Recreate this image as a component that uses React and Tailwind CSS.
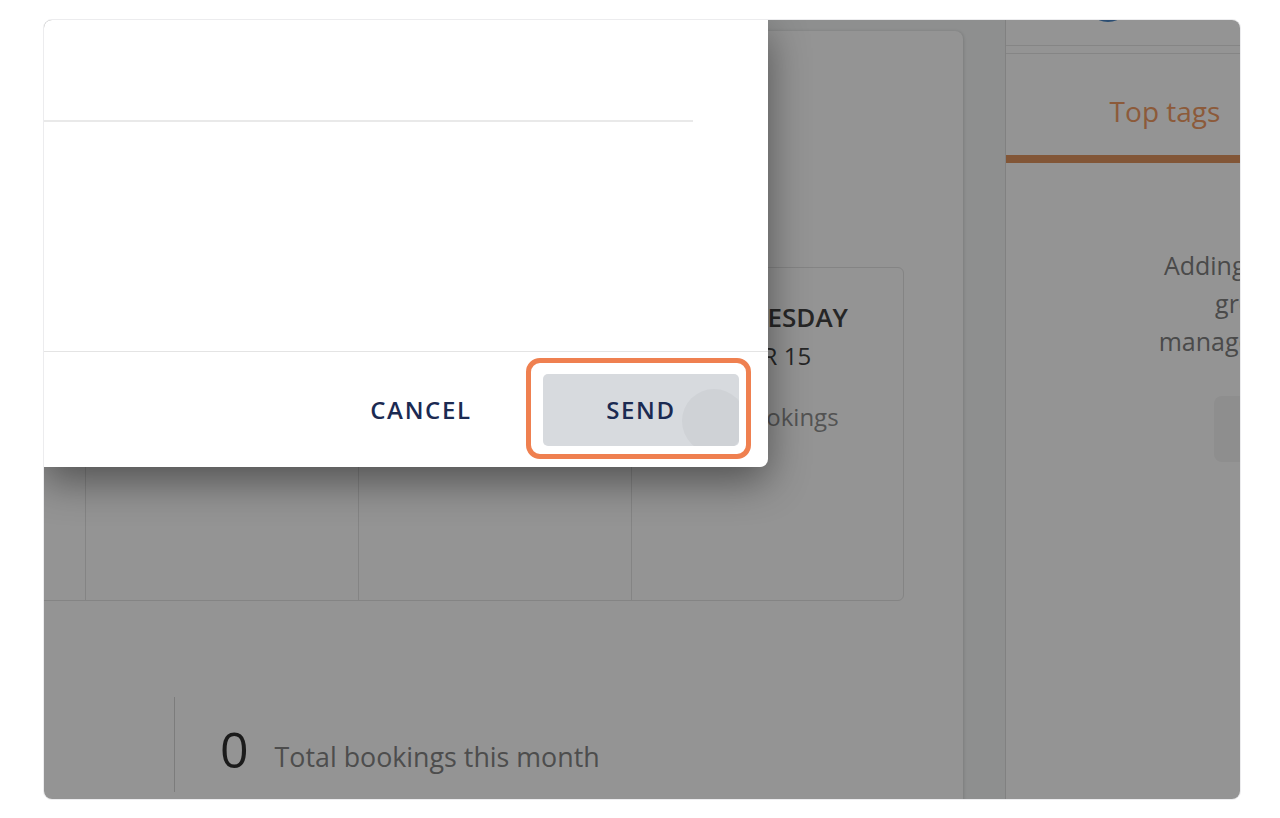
import React from "react";

const font = { fontFamily: '"Open Sans", "Noto Sans", Arial, sans-serif' };

function DayColumn({ day, date, last }) {
  return (
    <div className={`w-[273px] shrink-0 h-full flex flex-col items-center pt-[33px] ${last ? "" : "border-r border-[#e4e4e4]"}`}>
      <div className="text-[26px] leading-[32px] font-semibold text-[#424242]">{day}</div>
      <div className="mt-[8px] text-[24px] leading-[30px] text-[#424242]">{date}</div>
      <div className="mt-[31px] text-[24px] leading-[30px] text-[#8f8f8f]">No bookings</div>
    </div>
  );
}

export default function App() {
  return (
    <div className="min-h-screen bg-white pt-[19px] pl-[43px]" style={font}>
      <div className="relative w-[1198px] h-[781px] rounded-[9px] border border-[#ececee] overflow-hidden">
        {/* background page */}
        <div className="flex h-full">
          <div className="w-[961px] shrink-0 bg-[#f4f6f6] pt-[11px] pr-[42px]">
            <div className="ml-[-300px] w-[1219px] h-[800px] bg-white rounded-[8px] shadow-[1px_0_3px_rgba(0,0,0,0.12)] pl-[68px] pt-[236px]">
              <div className="w-[1092px] h-[334px] border border-[#e3e3e3] rounded-[6px] flex">
                <DayColumn day="SUNDAY" date="MAR 12" />
                <DayColumn day="MONDAY" date="MAR 13" />
                <DayColumn day="TUESDAY" date="MAR 14" />
                <DayColumn day="WEDNESDAY" date="MAR 15" last />
              </div>
              <div className="mt-[96px] flex">
                <div className="w-[362px] shrink-0 h-[95px]" />
                <div className="h-[95px] border-l border-[#d6d6d6] pl-[45px] flex items-end pb-[18px] gap-[26px]">
                  <span className="text-[50px] leading-[50px] text-[#303030]">0</span>
                  <span className="text-[26.8px] leading-[34px] text-[#858585]">Total bookings this month</span>
                </div>
              </div>
            </div>
          </div>
          <div className="w-[572px] shrink-0 bg-white border-l border-[#dedede]">
            <div className="flex h-[26px] border-b border-[#e6e6e6]">
              <div className="ml-[79px] mt-[-44px] w-[46px] h-[46px] shrink-0 rounded-full bg-[#4a86c5]" />
            </div>
            <div className="mt-[7px] border-t border-[#e6e6e6]">
              <div className="w-[318px]">
                <div className="pt-[39px] pb-[26px] text-center text-[28px] leading-[36px] text-[#f29c64]">Top tags</div>
                <div className="h-[8px] bg-[#e0955f]" />
              </div>
              <div className="mt-[83px] text-center text-[25px] leading-[38px] text-[#808080]">
                Adding tags helps you
                <br />
                groups easily
                <br />
                manage your bookings
              </div>
              <div className="mt-[36px] mx-auto w-[156px] h-[66px] rounded-[8px] bg-[#f4f4f4]" />
            </div>
          </div>
        </div>

        {/* modal overlay */}
        <div className="absolute inset-0 bg-black/[0.42]" />

        {/* dialog */}
        <div className="absolute left-0 top-0 w-[724px] h-[447px] bg-white rounded-br-[8px] shadow-[0_14px_40px_rgba(0,0,0,0.45)] flex flex-col">
          <div className="h-[102px] w-[649px] border-b-2 border-[#e9e9e9] shrink-0" />
          <div className="h-[229px] shrink-0" />
          <div className="flex-1 border-t border-[#e4e4e4] flex items-center justify-end gap-[24px] pr-[29px] pt-[1px]">
            <button className="w-[196px] h-[72px] rounded-[4px] text-[24px] font-semibold tracking-[0.07em] text-[#1b2a52]" style={font}>
              CANCEL
            </button>
            <div className="relative">
              <div className="absolute left-[-17px] top-[-16px] right-[-12px] bottom-[-13px] rounded-[14px] border-[5px] border-[#ef8050]" />
              <button className="relative overflow-hidden w-[196px] h-[72px] rounded-[5px] bg-[#d7dade] text-[24px] font-semibold tracking-[0.07em] text-[#1b2a52]" style={font}>
                <span className="absolute left-[139px] top-[15px] w-[64px] h-[64px] rounded-full bg-[#cfd2d6]" />
                <span className="relative">SEND</span>
              </button>
            </div>
          </div>
        </div>
      </div>
    </div>
  );
}
